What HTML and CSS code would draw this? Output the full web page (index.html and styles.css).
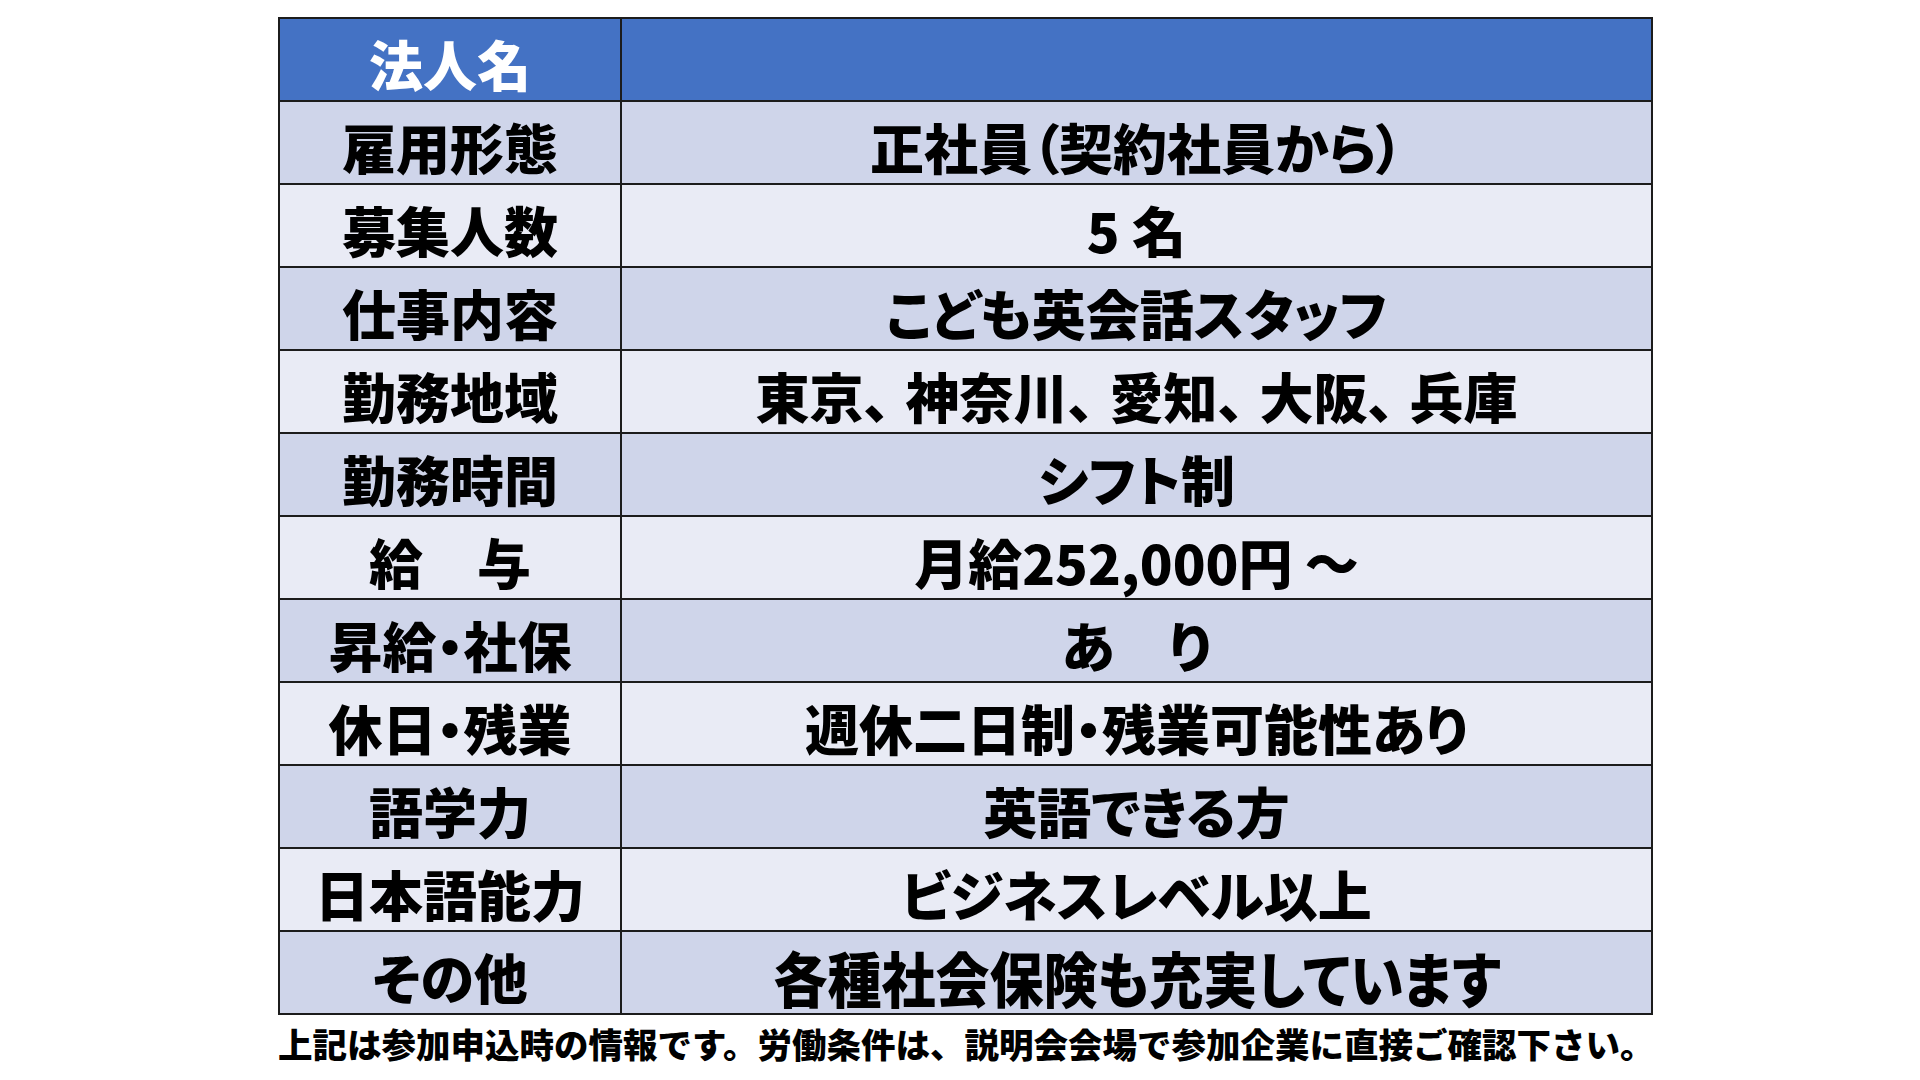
FILE: index.html
```html
<!DOCTYPE html>
<html lang="ja">
<head>
<meta charset="utf-8">
<title>募集要項</title>
<link rel="stylesheet" href="styles.css">
</head>
<body>
<div class="sheet">
  <table class="info">
    <tbody>
      <tr class="head"><th>法人名</th><td></td></tr>
      <tr class="dark"><th>雇用形態</th><td>正社員（契約社員から）</td></tr>
      <tr class="light"><th>募集人数</th><td>5 名</td></tr>
      <tr class="dark"><th>仕事内容</th><td>こども英会話スタッフ</td></tr>
      <tr class="light"><th>勤務地域</th><td>東京<span class="pn">、</span>神奈川<span class="pn">、</span>愛知<span class="pn">、</span>大阪<span class="pn">、</span>兵庫</td></tr>
      <tr class="dark"><th>勤務時間</th><td>シフト制</td></tr>
      <tr class="light"><th>給　与</th><td>月給252,000円 ～</td></tr>
      <tr class="dark"><th>昇給・社保</th><td>あ　り</td></tr>
      <tr class="light"><th>休日・残業</th><td>週休二日制・残業可能性あり</td></tr>
      <tr class="dark"><th>語学力</th><td>英語できる方</td></tr>
      <tr class="light"><th>日本語能力</th><td>ビジネスレベル以上</td></tr>
      <tr class="dark"><th>その他</th><td><span class="narrow">各種社会保険も充実しています</span></td></tr>
    </tbody>
  </table>
  <p class="note">上記は参加申込時の情報です。労働条件は、説明会会場で参加企業に直接ご確認下さい。</p>
</div>
</body>
</html>
```

FILE: styles.css
```css
html, body {
  margin: 0;
  padding: 0;
  background: #ffffff;
}

body {
  font-family: "Noto Sans CJK JP", "Noto Sans", sans-serif;
  color: #000000;
}

.sheet {
  padding-top: 17px;
  padding-left: 278px;
}

.info {
  border-collapse: collapse;
  width: 1375px;
  table-layout: fixed;
}

.info th,
.info td {
  border: 2px solid #1c1c1c;
  height: 73px;
  padding: 8px 0 0 0;
  text-align: center;
  vertical-align: middle;
  font-size: 54px;
  line-height: 1;
  font-weight: 900;
  white-space: nowrap;
  font-feature-settings: "palt";
}

.info th {
  width: 340px;
}

.info .pn {
  margin-right: 15px;
}

.head th,
.head td {
  background: #4472c4;
  color: #ffffff;
}

.dark th,
.dark td {
  background: #cfd5ea;
}

.light th,
.light td {
  background: #e9ebf5;
}

.narrow {
  display: inline-block;
  font-size: 60px;
  line-height: 1;
  transform: scaleX(0.9);
}

.note {
  margin: 8px 0 0 0;
  font-size: 34.5px;
  line-height: 1.2;
  font-weight: 900;
  white-space: nowrap;
}
```
